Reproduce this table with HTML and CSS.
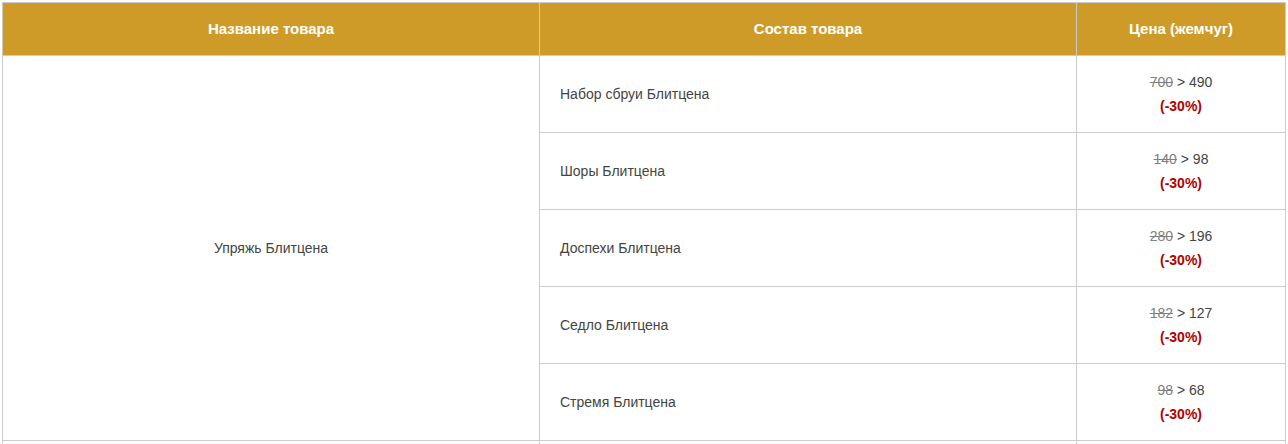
FILE: index.html
```html
<!DOCTYPE html>
<html lang="ru">
<head>
<meta charset="utf-8">
<link rel="stylesheet" href="styles.css">
</head>
<body>
<table class="price-table">
  <colgroup>
    <col class="c-name">
    <col class="c-set">
    <col class="c-price">
  </colgroup>
  <thead>
    <tr>
      <th>Название товара</th>
      <th>Состав товара</th>
      <th>Цена (жемчуг)</th>
    </tr>
  </thead>
  <tbody>
    <tr>
      <td class="name" rowspan="5">Упряжь Блитцена</td>
      <td class="item">Набор сбруи Блитцена</td>
      <td class="price"><s>700</s> &gt; 490<br><b class="off">(-30%)</b></td>
    </tr>
    <tr>
      <td class="item">Шоры Блитцена</td>
      <td class="price"><s>140</s> &gt; 98<br><b class="off">(-30%)</b></td>
    </tr>
    <tr>
      <td class="item">Доспехи Блитцена</td>
      <td class="price"><s>280</s> &gt; 196<br><b class="off">(-30%)</b></td>
    </tr>
    <tr>
      <td class="item">Седло Блитцена</td>
      <td class="price"><s>182</s> &gt; 127<br><b class="off">(-30%)</b></td>
    </tr>
    <tr>
      <td class="item">Стремя Блитцена</td>
      <td class="price"><s>98</s> &gt; 68<br><b class="off">(-30%)</b></td>
    </tr>
    <tr class="next">
      <td class="name"></td>
      <td class="item"></td>
      <td class="price"></td>
    </tr>
  </tbody>
</table>
</body>
</html>
```
FILE: styles.css
```css
html, body {
  margin: 0;
  padding: 0;
  background: #fff;
}
body {
  padding: 2px 0 0 2px;
  font-family: "Liberation Sans", Arial, sans-serif;
  font-size: 14px;
  color: #444444;
}
.price-table {
  border-collapse: collapse;
  width: 1283px;
  table-layout: fixed;
}
.c-name { width: 537px; }
.c-set { width: 537px; }
.c-price { width: 209px; }
.price-table th,
.price-table td {
  border: 1px solid #cccccc;
}
.price-table th {
  background: #cf9b28;
  color: #fff;
  font-size: 15px;
  font-weight: bold;
  height: 52px;
  padding: 0 10px;
  text-align: center;
  vertical-align: middle;
  line-height: 20px;
}
.price-table td {
  line-height: 24px;
  padding: 14px 20px;
  vertical-align: middle;
}
.name {
  text-align: center;
}
.item {
  text-align: left;
  height: 48px;
}
.price {
  text-align: center;
}
.price s {
  color: #808080;
}
.off {
  color: #b30000;
  font-weight: bold;
}
.next td {
  height: 48px;
}
```
